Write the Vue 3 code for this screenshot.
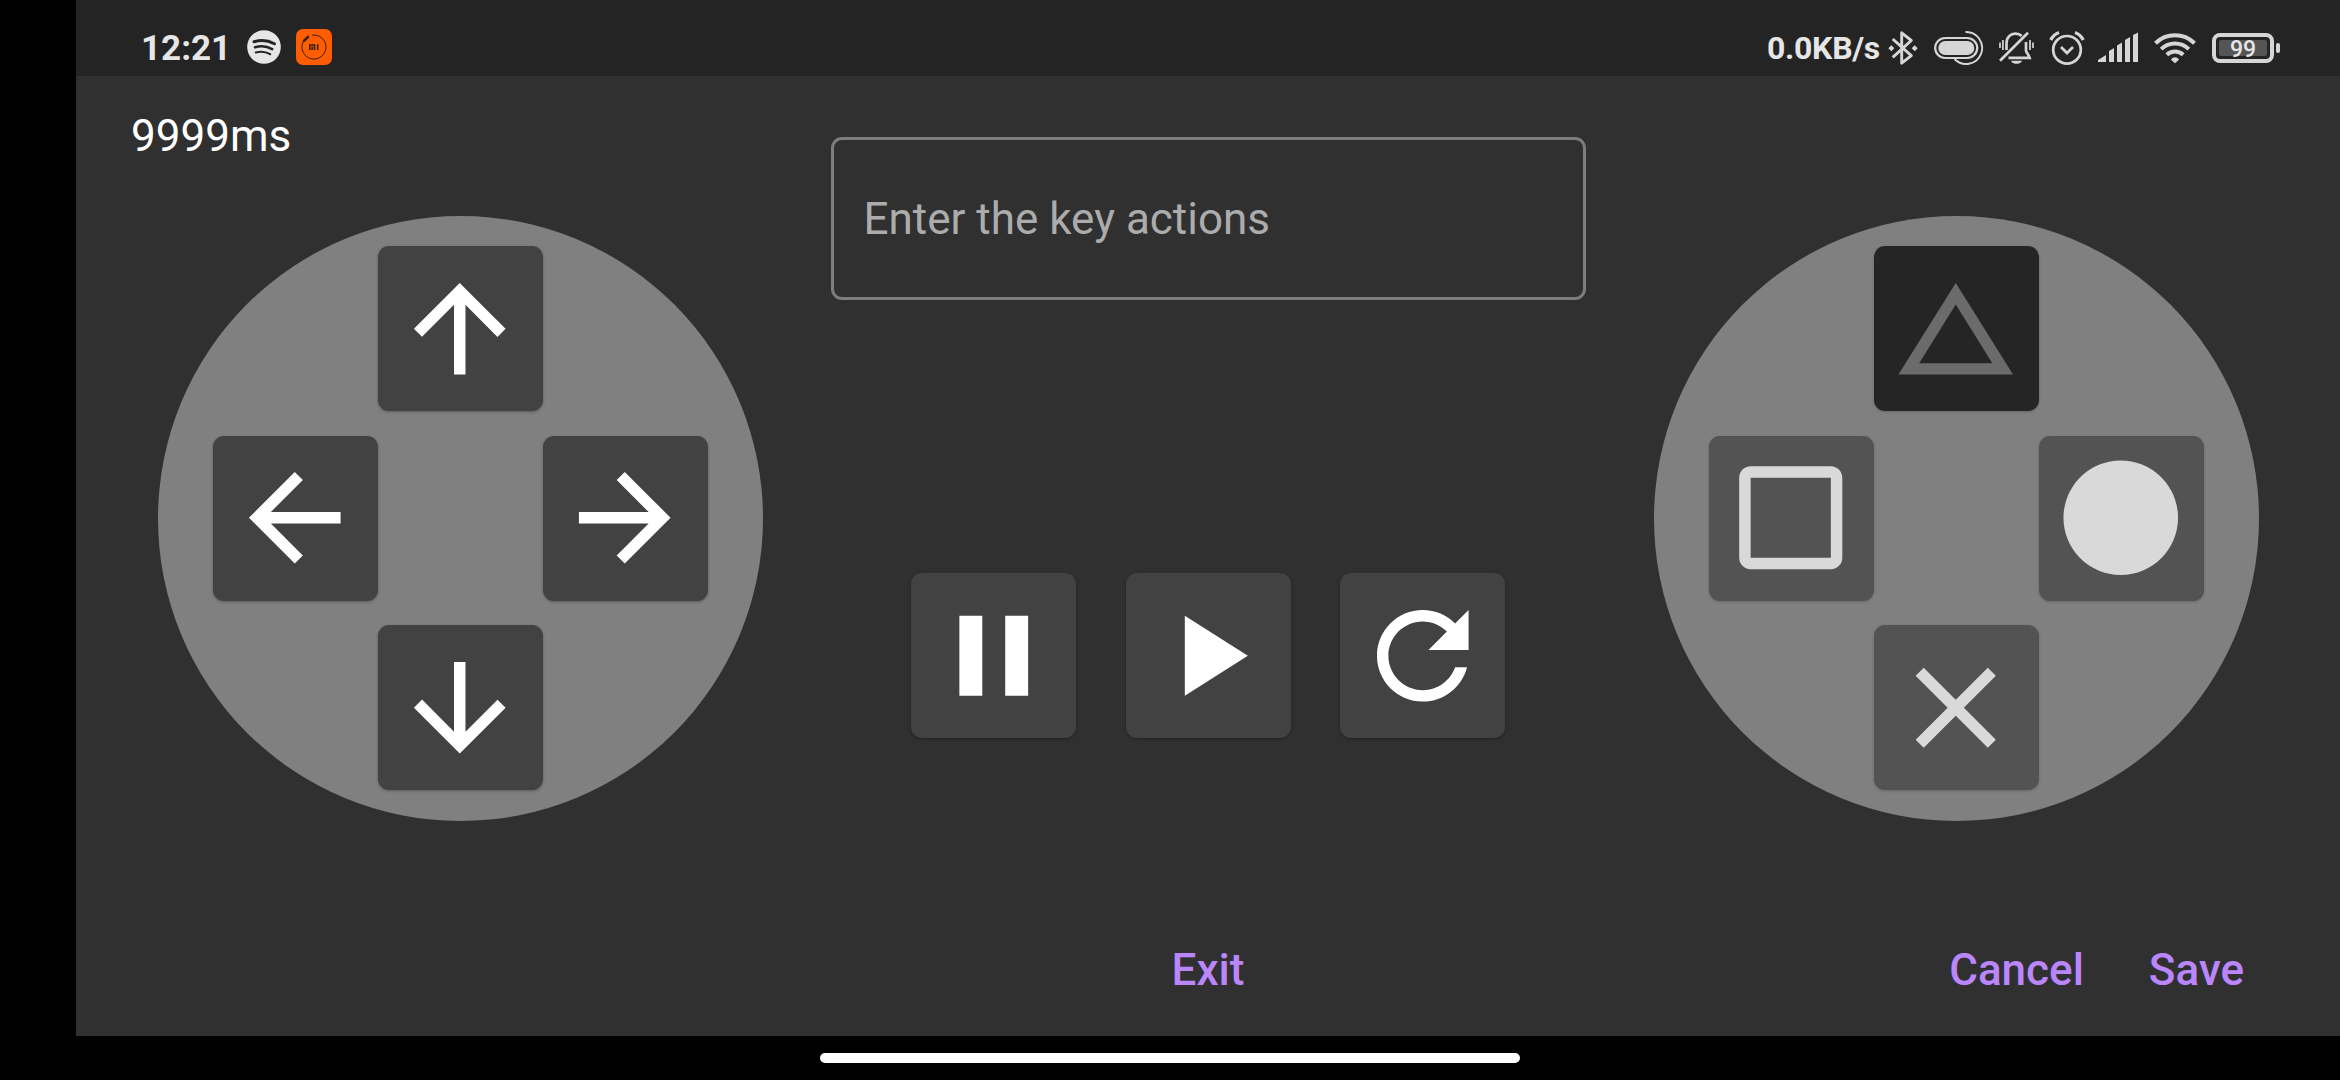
<script setup>
const arrows = [
  { name: 'up', d: 'M4 12l1.41 1.41L11 7.83V20h2V7.83l5.58 5.59L20 12l-8-8-8 8z' },
  { name: 'left', d: 'M20 11H7.83l5.59-5.59L12 4l-8 8 8 8 1.41-1.41L7.83 13H20v-2z' },
  { name: 'right', d: 'M12 4l-1.41 1.41L16.17 11H4v2h12.17l-5.58 5.59L12 20l8-8z' },
  { name: 'down', d: 'M20 12l-1.41-1.41L13 16.17V4h-2v12.17l-5.58-5.59L4 12l8 8 8-8z' },
]
const shapes = [
  { name: 'up', off: true, d: 'M12 7.77L18.39 18H5.61L12 7.77M12 4L2 20h20L12 4z' },
  { name: 'left', d: 'M19 5v14H5V5h14m0-2H5c-1.1 0-2 .9-2 2v14c0 1.1.9 2 2 2h14c1.1 0 2-.9 2-2V5c0-1.1-.9-2-2-2z' },
  { name: 'right', d: 'M12 2C6.48 2 2 6.48 2 12s4.48 10 10 10 10-4.48 10-10S17.52 2 12 2z' },
  { name: 'down', d: 'M19 6.41L17.59 5 12 10.59 6.41 5 5 6.41 10.59 12 5 17.59 6.41 19 12 13.41 17.59 19 19 17.59 13.41 12z' },
]
const controls = [
  { name: 'pause', d: 'M6 19h4V5H6v14zm8-14v14h4V5h-4z' },
  { name: 'play', d: 'M8 5v14l11-7z' },
  { name: 'replay', d: 'M17.65 6.35C16.2 4.9 14.21 4 12 4c-4.42 0-7.99 3.58-7.99 8s3.57 8 7.99 8c3.73 0 6.84-2.55 7.73-6h-2.08c-.82 2.33-3.04 4-5.65 4-3.31 0-6-2.69-6-6s2.69-6 6-6c1.66 0 3.14.69 4.22 1.78L13 11h7V4l-2.35 2.35z' },
]
</script>

<template>
  <div class="device">
    <div class="window">
      <header class="status">
        <span class="clock">12:21</span>
        <svg class="spotify" width="34" height="34" viewBox="0 0 34 34">
          <circle cx="17" cy="17" r="16.8" fill="#e6e6e6" />
          <g fill="none" stroke="#242424" stroke-linecap="round">
            <path d="M7 11.8c7-2 14.400-1.300 20.400 2" stroke-width="3" />
            <path d="M8 17.300c6-1.700 12.200-1 17.200 1.900" stroke-width="2.500" />
            <path d="M8.800 22.400c5-1.300 10-.8 14.400 1.800" stroke-width="2.100" />
          </g>
        </svg>
        <svg class="mi" width="36" height="36" viewBox="0 0 36 36">
          <rect width="36" height="36" rx="7" fill="#ff5d00" />
          <g fill="none" stroke="#33200f">
            <path d="M16 6.200a12 12 0 1 1-8.800 6.500" stroke-width="1" />
            <path d="M8 11.800l4-4" stroke-width="2.600" stroke-linecap="round" />
            <path d="M13.800 21v-5h4.700v5M16.200 17.800V21M21.700 15.200V21" stroke-width="1.600" />
          </g>
        </svg>
        <div class="grow"></div>
        <span class="rate">0.0KB/s</span>
        <svg class="bt" width="30" height="36" viewBox="0 0 30 36">
          <path d="M4.700 9L23.300 25.700 13.700 33.200V2.800L23.300 10.500 4.700 27.300" fill="none" stroke="#d6d6d6" stroke-width="2.900" stroke-linejoin="round" />
          <path d="M3.300 15.300l3 3-3 3-3-3zM26.700 15.300l3 3-3 3-3-3z" fill="#d6d6d6" />
        </svg>
        <svg class="pill" width="50" height="36" viewBox="0 0 50 36">
          <rect x="1.200" y="8" width="42" height="20" rx="10" fill="none" stroke="#d6d6d6" stroke-width="2.200" />
          <rect x="4.300" y="11" width="36" height="14" rx="7" fill="#d6d6d6" />
          <path d="M31.500 2a16 16 0 1 1-11 27" fill="none" stroke="#d6d6d6" stroke-width="1.900" />
        </svg>
        <svg class="bell" width="36" height="36" viewBox="0 0 36 36">
          <g fill="none" stroke="#d6d6d6" stroke-width="2.700">
            <path d="M7.500 20v-6.500C7.500 7 11.500 3.600 16.500 3.600c2.600 0 4.700.9 6.200 2.400M27 12v8.500c0 2 2.500 3.500 3.700 7.300H9.500" />
            <path d="M1 30.700L29 2.700" />
            <path d="M1 12.500v5.500M3.900 10v10M31 10v10M34 12.500v5.500" stroke-width="1.700" />
          </g>
          <path d="M12 30.700h11c-1.500 4.200-9.500 4.200-11 0z" fill="#d6d6d6" />
        </svg>
        <svg class="alarm" width="36" height="36" viewBox="0 0 36 36">
          <g fill="none" stroke="#d6d6d6">
            <circle cx="18" cy="19.800" r="13.800" stroke-width="2.700" />
            <path d="M12 17l6 6 6-6" stroke-width="2.800" />
            <path d="M1.800 10C3.500 6.500 6 4 10 2.500M34.200 10C32.500 6.500 30 4 26 2.500" stroke-width="3.300" />
          </g>
        </svg>
        <svg class="signal" width="41" height="36" viewBox="0 0 41 36">
          <path d="M0 32v-2l8-5v7zM11 32V21l5-3v14zM19 32V15.500l5-3V32zM27 32V10l5-3v25zM35 32V5l5-2.500V32z" fill="#d6d6d6" />
        </svg>
        <svg class="wifi" width="42" height="36" viewBox="0 0 42 36">
          <g fill="none" stroke="#d6d6d6" stroke-width="4">
            <path d="M1.500 13.200a28 28 0 0 1 39 0" />
            <path d="M7.200 19.100a20 20 0 0 1 27.600 0" />
            <path d="M12.800 24.700a12 12 0 0 1 16.400 0" />
          </g>
          <path d="M21 33.300l-4-3.600c1.800-3.300 6.200-3.300 8 0z" fill="#d6d6d6" />
        </svg>
        <svg class="battery" width="68" height="36" viewBox="0 0 68 36">
          <rect x="2" y="5" width="58" height="26" rx="6" fill="none" stroke="#d6d6d6" stroke-width="4" />
          <rect x="7" y="10" width="48" height="16" rx="2" fill="#555" />
          <rect x="64" y="13" width="4" height="10" rx="2" fill="#d6d6d6" />
          <text x="31" y="26.500" text-anchor="middle">99</text>
        </svg>
      </header>

      <main class="stage">
        <section class="side">
          <div class="timer">9999ms</div>
          <div class="disc">
            <button v-for="a in arrows" :key="a.name" class="key" :class="a.name">
              <svg viewBox="0 0 24 24"><path :d="a.d" /></svg>
            </button>
          </div>
        </section>

        <section class="middle">
          <div class="field">Enter the key actions</div>
          <div class="controls">
            <button v-for="c in controls" :key="c.name" class="key">
              <svg viewBox="0 0 24 24"><path :d="c.d" /></svg>
            </button>
          </div>
        </section>

        <section class="side right-side">
          <div class="disc">
            <button v-for="s in shapes" :key="s.name" class="key soft" :class="[s.name, { off: s.off }]">
              <svg viewBox="0 0 24 24"><path :d="s.d" /></svg>
            </button>
          </div>
        </section>
      </main>

      <footer class="actions">
        <div></div>
        <button class="link">Exit</button>
        <div class="confirm">
          <button class="link">Cancel</button>
          <button class="link">Save</button>
        </div>
      </footer>
    </div>
    <div class="home"><div class="handle"></div></div>
  </div>
</template>

<style>
body {
  background: #000;
}
</style>

<style scoped>
.device {
  width: 2340px;
  height: 1080px;
  display: flex;
  flex-direction: column;
  background: #000;
  overflow: hidden;
  font-family: Roboto, "Liberation Sans", sans-serif;
}
.window {
  margin-left: 76px;
  height: 1036px;
  display: flex;
  flex-direction: column;
  background: #303030;
}
.status {
  box-sizing: border-box;
  height: 76px;
  flex: none;
  display: flex;
  align-items: center;
  padding: 20px 60px 0 65px;
  background: #242424;
  color: #e6e6e6;
  font-weight: 700;
  white-space: nowrap;
}
.status svg {
  flex: none;
}
.clock {
  width: 106px;
  font-size: 35px;
}
.spotify {
  margin-top: -2px;
}
.mi {
  margin-left: 15px;
  margin-top: -2px;
}
.grow {
  flex: 1;
}
.rate {
  width: 121px;
  font-size: 32px;
  letter-spacing: -0.300px;
}
.pill {
  margin-left: 16px;
}
.bell {
  margin-left: 15px;
}
.alarm {
  margin-left: 14px;
}
.signal {
  margin-left: 13px;
}
.wifi {
  margin-left: 15px;
}
.battery {
  margin-left: 16px;
}
.battery text {
  font-size: 23px;
  font-weight: 500;
  fill: #e6e6e6;
}
.stage {
  height: 850px;
  flex: none;
  display: flex;
  justify-content: space-between;
  padding: 0 55px;
}
.side {
  width: 658px;
  display: flex;
  flex-direction: column;
  align-items: center;
}
.timer {
  align-self: flex-start;
  margin-top: 34px;
  height: 52px;
  font-size: 44px;
  line-height: 52px;
  color: #fff;
}
.disc {
  box-sizing: border-box;
  width: 605px;
  height: 605px;
  margin-top: 53.500px;
  padding: 30.250px 55px;
  border-radius: 50%;
  background: #808080;
  display: grid;
  grid-template: repeat(3, 165px) / repeat(3, 165px);
  row-gap: 24.750px;
}
.right-side .disc {
  margin-top: 139.500px;
}
.key {
  box-sizing: border-box;
  width: 165px;
  height: 165px;
  padding: 0;
  border: 0;
  border-radius: 11px;
  background: #424242;
  color: #fff;
  display: flex;
  align-items: center;
  justify-content: center;
  box-shadow: 0 1px 3px rgba(0, 0, 0, 0.3);
}
.key svg {
  width: 137.500px;
  height: 137.500px;
  fill: currentColor;
}
.up {
  grid-area: 1 / 2;
}
.left {
  grid-area: 2 / 1;
}
.right {
  grid-area: 2 / 3;
}
.down {
  grid-area: 3 / 2;
}
.soft {
  background: #535353;
  color: #d9d9d9;
  box-shadow: 0 1px 3px rgba(0, 0, 0, 0.2);
}
.off {
  background: #252525;
  color: #6b6b6b;
}
.middle {
  width: 755px;
  display: flex;
  flex-direction: column;
  align-items: center;
}
.field {
  box-sizing: border-box;
  width: 755px;
  height: 163px;
  margin-top: 61px;
  padding: 0 30px;
  border: 3px solid #7d7d7d;
  border-radius: 11px;
  color: #acacac;
  font-size: 44px;
  line-height: 158px;
}
.controls {
  display: flex;
  gap: 49.500px;
  margin-top: 273px;
}
.actions {
  flex: 1;
  display: grid;
  grid-template-columns: 1fr auto 1fr;
  align-items: start;
  padding: 18px 96px 0;
}
.confirm {
  display: flex;
  justify-content: flex-end;
  gap: 65px;
}
.link {
  padding: 0;
  border: 0;
  background: none;
  color: #bb86fc;
  font: 500 44px/52px Roboto, "Liberation Sans", sans-serif;
}
.home {
  flex: 1;
  display: flex;
  justify-content: center;
  align-items: center;
}
.handle {
  width: 700px;
  height: 10px;
  border-radius: 5px;
  background: #fff;
}
</style>
